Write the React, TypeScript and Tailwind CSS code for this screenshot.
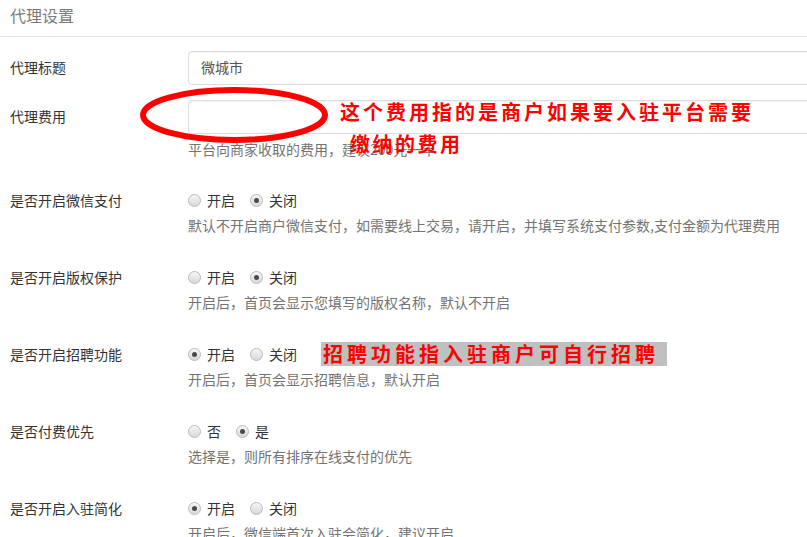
import React from 'react';

type Row =
  | { kind: 'input'; label: string; value?: string; help?: string }
  | { kind: 'radio'; label: string; options: string[]; checked: number; help: string; note?: string };

const rows: Row[] = [
  { kind: 'input', label: '代理标题', value: '微城市' },
  { kind: 'input', label: '代理费用', value: '', help: '平台向商家收取的费用，建议200元一年' },
  {
    kind: 'radio',
    label: '是否开启微信支付',
    options: ['开启', '关闭'],
    checked: 1,
    help: '默认不开启商户微信支付，如需要线上交易，请开启，并填写系统支付参数,支付金额为代理费用',
  },
  {
    kind: 'radio',
    label: '是否开启版权保护',
    options: ['开启', '关闭'],
    checked: 1,
    help: '开启后，首页会显示您填写的版权名称，默认不开启',
  },
  {
    kind: 'radio',
    label: '是否开启招聘功能',
    options: ['开启', '关闭'],
    checked: 0,
    help: '开启后，首页会显示招聘信息，默认开启',
    note: '招聘功能指入驻商户可自行招聘',
  },
  {
    kind: 'radio',
    label: '是否付费优先',
    options: ['否', '是'],
    checked: 1,
    help: '选择是，则所有排序在线支付的优先',
  },
  {
    kind: 'radio',
    label: '是否开启入驻简化',
    options: ['开启', '关闭'],
    checked: 0,
    help: '开启后，微信端首次入驻会简化，建议开启',
  },
];

function Radio({ checked }: { checked?: boolean }) {
  return (
    <span className="inline-flex w-[13px] h-[13px] shrink-0 items-center justify-center rounded-full border border-[#b9b9b9] bg-linear-to-b from-[#f6f6f6] to-[#d9d9d9]">
      {checked && <span className="w-[5px] h-[5px] rounded-full bg-[#4a4a4a]" />}
    </span>
  );
}

export default function App() {
  return (
    <div className="relative w-[807px] h-[537px] overflow-hidden bg-white text-[14px] text-[#333] font-['Noto_Sans_CJK_SC',sans-serif]">
      {/* Heading */}
      <div className="h-[37px] border-b border-[#e3e3e3] pl-[10px] pt-[4px] text-[16px] leading-[22px] text-[#7a7a7a]">
        代理设置
      </div>

      <div className="pt-[14px]">
        {rows.map((row, i) => (
          <div key={i} className={`flex ${row.kind === 'radio' ? 'mb-[16px]' : 'mb-[15px]'}`}>
            <div className="w-[188px] shrink-0 pl-[10px] pt-[6px] leading-5">{row.label}</div>
            <div className="flex-1">
              {row.kind === 'input' ? (
                <div className="w-[660px] h-[34px] rounded-[4px] border border-[#dcdcdc] pl-[12px] leading-[31px] text-[#555] shadow-[inset_0_1px_1px_rgba(0,0,0,0.05)]">
                  {row.value}
                </div>
              ) : (
                <div className="flex items-center pt-[6px] leading-5">
                  {row.options.map((opt, j) => (
                    <label key={j} className="flex items-center gap-[6px] mr-[15px]">
                      <Radio checked={j === row.checked} />
                      <span>{opt}</span>
                    </label>
                  ))}
                  {row.note && (
                    <span className="ml-[9px] -my-[2px] w-[346px] h-[24px] bg-[#c0c0c0] pl-[2px] text-[20px] leading-[24px] font-bold tracking-[4px] text-[#ff0000] whitespace-nowrap">
                      {row.note}
                    </span>
                  )}
                </div>
              )}
              {row.help && <div className="mt-[5px] mb-[10px] leading-5 text-[#737373] whitespace-nowrap">{row.help}</div>}
            </div>
          </div>
        ))}
      </div>

      {/* annotation: red ellipse around fee input */}
      <svg className="absolute left-[137px] top-[85px]" width="196" height="62" viewBox="0 0 196 62">
        <ellipse cx="97" cy="30" rx="91" ry="25" fill="none" stroke="#ff0000" strokeWidth="6" />
      </svg>
      <div className="absolute left-[340px] top-[100px] text-[20px] leading-[24px] font-bold tracking-[3px] text-[#ff0000] whitespace-nowrap">
        这个费用指的是商户如果要入驻平台需要
      </div>
      <div className="absolute left-[350px] top-[132px] text-[20px] leading-[24px] font-bold tracking-[2.5px] text-[#ff0000] whitespace-nowrap">
        缴纳的费用
      </div>
    </div>
  );
}
